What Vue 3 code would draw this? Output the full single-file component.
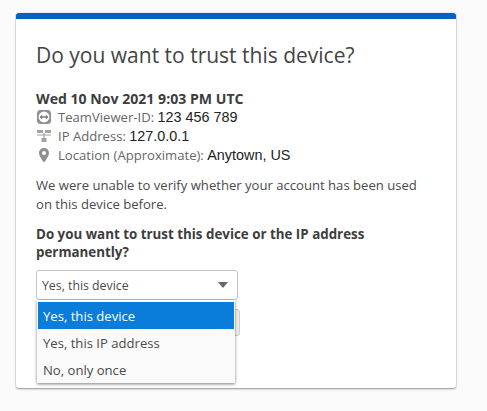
<template>
  <div class="page">
    <div class="card">
      <h1 class="title">Do you want to trust this device?</h1>

      <div class="when">Wed 10 Nov 2021 9:03 PM UTC</div>
      <div class="info-row">
        <svg class="icon" viewBox="0 0 16 16">
          <rect x="1" y="1" width="14" height="14" rx="3.5" fill="#8f8f8f" />
          <circle cx="8" cy="8" r="5.4" fill="#fff" />
          <path d="M3.500 8 6.200 5.600V7.300H9.800V5.600L12.500 8 9.800 10.400V8.700H6.200V10.400Z" fill="#7d7d7d" />
        </svg>
        <span><span class="label">TeamViewer-ID:</span> <span class="value">123 456 789</span></span>
      </div>
      <div class="info-row">
        <svg class="icon" viewBox="0 0 16 16">
          <path d="M1 2H7V5H1ZM9 2H15V5H9ZM5.5 10H10.5V14H5.5Z" fill="#a3a3a3" />
          <path d="M1 7H15M8 5V10" stroke="#a3a3a3" stroke-width="1.2" fill="none" />
        </svg>
        <span><span class="label">IP Address:</span> <span class="value">127.0.0.1</span></span>
      </div>
      <div class="info-row">
        <svg class="icon" viewBox="0 0 16 16">
          <path fill-rule="evenodd" d="M8 1C5 1 3 3.200 3 6C3 9.500 8 15.500 8 15.500S13 9.500 13 6C13 3.200 11 1 8 1ZM8 4A2 2 0 1 1 8 8A2 2 0 1 1 8 4Z" fill="#8f8f8f" />
        </svg>
        <span><span class="label">Location (Approximate):</span> <span class="value">Anytown, US</span></span>
      </div>

      <p class="note">We were unable to verify whether your account has been used on this device before.</p>
      <p class="question">Do you want to trust this device or the IP address permanently?</p>

      <div class="select-wrap">
        <div class="select">
          <span class="select-text">{{ options[0] }}</span>
          <span class="caret"></span>
        </div>
        <div class="behind-btn"></div>
        <ul class="menu">
          <li v-for="(opt, i) in options" :key="opt" :class="{ active: i === 0 }">{{ opt }}</li>
        </ul>
      </div>
    </div>
  </div>
</template>

<script setup>
const options = ['Yes, this device', 'Yes, this IP address', 'No, only once']
</script>

<style>
html, body {
  margin: 0;
  background: #fafafa;
}
</style>

<style scoped>
.page {
  width: 487px;
  height: 411px;
  box-sizing: border-box;
  padding: 13px 31px 0 16px;
  background: #fafafa;
  overflow: hidden;
  font-family: "Open Sans", sans-serif;
  font-size: 13.1px;
  color: #4a4a4a;
}

.card {
  height: 375px;
  box-sizing: border-box;
  padding: 21px 20px 0 20px;
  background: #fff;
  border-top: 6px solid #0063c3;
  border-radius: 3px;
  box-shadow: 0 1px 2px rgba(0, 0, 0, 0.4), 0 0 2px rgba(0, 0, 0, 0.12);
}

.title {
  margin: 0 0 20px;
  font-size: 21px;
  font-weight: 400;
  line-height: 30px;
  color: #444;
}

.when {
  font-size: 14.1px;
  font-weight: 700;
  line-height: 18px;
  color: #3d3d3d;
}

.info-row {
  display: flex;
  align-items: center;
  height: 18.7px;
  white-space: pre;
}

.icon {
  width: 16px;
  height: 16px;
  margin: 0 6px 0 0;
  flex: none;
}

.label {
  color: #666;
}

.value {
  font-family: "Liberation Sans", sans-serif;
  font-size: 14.4px;
  color: #222;
}

.note {
  margin: 12px 0 10.5px;
  padding-right: 8px;
  line-height: 19px;
}

.question {
  margin: 0 0 8.4px;
  font-size: 13.35px;
  font-weight: 700;
  line-height: 18.5px;
  color: #3d3d3d;
}

.select-wrap {
  position: relative;
  width: 202px;
}

.select {
  display: flex;
  align-items: center;
  justify-content: space-between;
  height: 30px;
  box-sizing: border-box;
  padding: 0 9px 0 5px;
  border: 1px solid #c4c4c4;
  border-radius: 3px;
  background: #fff;
  font-size: 12.3px;
}

.select-text {
  padding-top: 2px;
}

.caret {
  width: 0;
  height: 0;
  border-left: 5px solid transparent;
  border-right: 5px solid transparent;
  border-top: 6px solid #666;
}

.behind-btn {
  position: absolute;
  top: 39px;
  left: 190px;
  width: 14px;
  height: 27px;
  box-sizing: border-box;
  border: 1px solid #ccc;
  border-radius: 3px;
  background: #eee;
}

.menu {
  position: absolute;
  top: 30px;
  left: 1px;
  width: 198px;
  box-sizing: border-box;
  margin: 0;
  padding: 2px 1px 0;
  list-style: none;
  background: #fafafa;
  box-shadow: 0 1px 3px rgba(0, 0, 0, 0.5);
}

.menu li {
  height: 27px;
  line-height: 28.5px;
  padding: 0 5px;
  color: #4a4a4a;
}

.menu li.active {
  background: #0a7ddb;
  color: #fff;
}
</style>
